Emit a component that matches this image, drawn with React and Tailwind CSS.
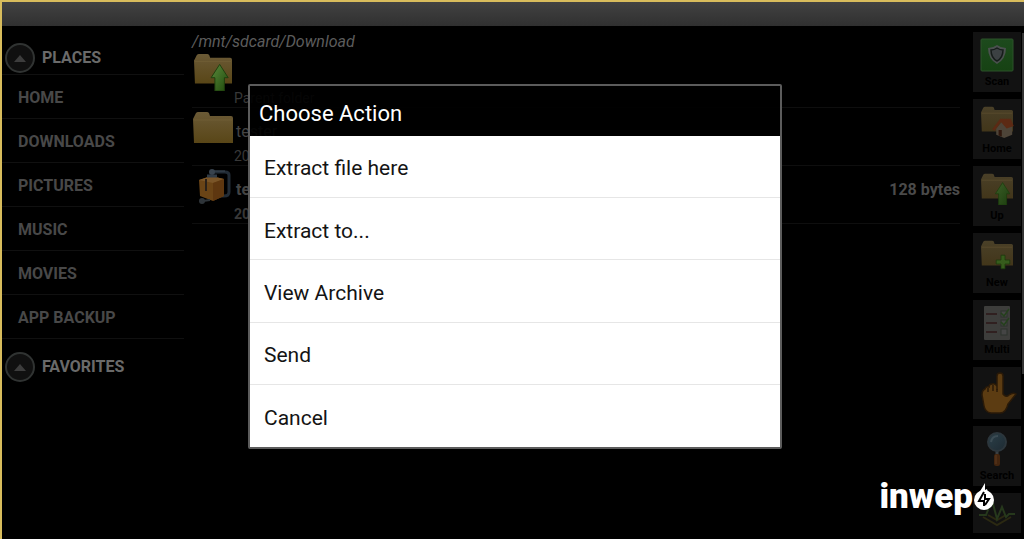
const places = ["HOME", "DOWNLOADS", "PICTURES", "MUSIC", "MOVIES", "APP BACKUP"];

const actions = ["Extract file here", "Extract to...", "View Archive", "Send", "Cancel"];

function Gradients() {
    return (
        <svg className="absolute h-0 w-0" aria-hidden="true">
            <defs>
                <linearGradient id="folder" x1="0" y1="0" x2="0" y2="1">
                    <stop offset="0" stopColor="#6b5a36" />
                    <stop offset="1" stopColor="#594617" />
                </linearGradient>
                <linearGradient id="folderDim" x1="0" y1="0" x2="0" y2="1">
                    <stop offset="0" stopColor="#4a4028" />
                    <stop offset="1" stopColor="#42361a" />
                </linearGradient>
                <linearGradient id="arrow" x1="0" y1="0" x2="1" y2="1">
                    <stop offset="0" stopColor="#5a8a3c" />
                    <stop offset="1" stopColor="#1f4a0c" />
                </linearGradient>
                <linearGradient id="arrowDim" x1="0" y1="0" x2="1" y2="1">
                    <stop offset="0" stopColor="#3c5e28" />
                    <stop offset="1" stopColor="#1c3e0e" />
                </linearGradient>
                <linearGradient id="scan" x1="0" y1="0" x2="0" y2="1">
                    <stop offset="0" stopColor="#1d4a1d" />
                    <stop offset="1" stopColor="#164213" />
                </linearGradient>
                <linearGradient id="lens" x1="0" y1="0" x2="1" y2="1">
                    <stop offset="0" stopColor="#2b4049" />
                    <stop offset="1" stopColor="#1e2a32" />
                </linearGradient>
            </defs>
        </svg>
    );
}

function FolderIcon({ className, fill = "url(#folder)", children }) {
    return (
        <svg viewBox="0 0 42 40" className={className} aria-hidden="true">
            <path d="M2 6 L4 2 Q5 1 6 1 H15 Q16 1 17 2 L18 5 H39 Q41 5 41 7 V32 H2 L1 8 Z" fill={fill} />
            <path d="M2 9 H40" stroke="#806c42" strokeOpacity="0.35" />
            {children}
        </svg>
    );
}

function ArrowUp({ fill = "url(#arrow)" }) {
    return <path d="M28 12 L37 26 H33 V40 H23 V26 H19 Z" fill={fill} stroke="#1d3d0e" strokeWidth="1" />;
}

function ArchiveIcon() {
    return (
        <svg viewBox="0 0 36 38" className="h-[38px] w-9" aria-hidden="true">
            <path d="M16 3 H30 Q34 3 34 6 V23 Q34 27 29 27 H25" fill="none" stroke="#222c36" strokeWidth="3" />
            <path d="M18 2 H30" stroke="#3c4854" />
            <path d="M4 11 L16 7 L29 10 V27 L18 32 L5 27 Z" fill="#6a4416" />
            <path d="M4 11 L16 7 L29 10 L18 14 Z" fill="#7a5528" />
            <path d="M18 14 L29 10 V27 L18 32 Z" fill="#5e3710" />
            <path d="M11 10 V22" stroke="#2b2119" strokeWidth="2" />
            <circle cx="17" cy="3" r="3" fill="#38434e" />
            <path d="M12 7 H22" stroke="#303b46" strokeWidth="3" />
            <circle cx="7" cy="32" r="3" fill="#2e3439" />
            <path d="M8 32 L15 31" stroke="#2e3439" strokeWidth="2" />
        </svg>
    );
}

function ScanIcon() {
    return (
        <svg viewBox="0 0 34 34" className="h-[34px] w-[34px]" aria-hidden="true">
            <rect x="1" y="1" width="32" height="32" rx="1" fill="url(#scan)" stroke="#2c522a" />
            <path d="M17 7 Q21 10 26 10 Q26 21 17 26 Q8 21 8 10 Q13 10 17 7 Z" fill="#4a504e" />
            <path d="M17 10 Q20 12 23 12 Q23 20 17 23 Q11 20 11 12 Q14 12 17 10 Z" fill="#3c4143" stroke="#161c1a" strokeWidth="1.5" />
        </svg>
    );
}

function HomeIcon() {
    return (
        <FolderIcon className="h-8 w-[34px]" fill="url(#folderDim)">
            <path d="M20 28 L27 20 L40 24 V36 L30 40 L20 36 Z" fill="#4d4438" />
            <path d="M15 29 L25 16 L38 16 L42 25 L33 28 L26 20 L18 31 Z" fill="#5c2a14" />
            <path d="M23 30 H27 V38 L23 37 Z" fill="#30180e" />
        </FolderIcon>
    );
}

function UpIcon() {
    return (
        <FolderIcon className="h-8 w-[34px]" fill="url(#folderDim)">
            <ArrowUp fill="url(#arrowDim)" />
        </FolderIcon>
    );
}

function NewIcon() {
    return (
        <FolderIcon className="h-8 w-[34px]" fill="url(#folderDim)">
            <path d="M26 19 H31 V25 H37 V30 H31 V36 H26 V30 H20 V25 H26 Z" fill="#365c1c" stroke="#1c3a0c" />
        </FolderIcon>
    );
}

function MultiIcon() {
    return (
        <svg viewBox="0 0 28 36" className="h-9 w-7" aria-hidden="true">
            <rect x="1" y="1" width="26" height="34" rx="1" fill="#3d3d3b" />
            <path d="M3 9 H14 M3 18 H14 M3 27 H14" stroke="#302020" strokeWidth="2" />
            <g fill="#454545" stroke="#2c332c">
                <rect x="18" y="6" width="6" height="6" />
                <rect x="18" y="15" width="6" height="6" />
                <rect x="18" y="24" width="6" height="6" />
            </g>
            <path d="M18 8 L21 11 L26 4 M18 17 L21 20 L26 13" fill="none" stroke="#24401c" strokeWidth="1.5" />
        </svg>
    );
}

function HandIcon() {
    return (
        <svg viewBox="0 0 36 42" className="ml-1 h-[42px] w-9" aria-hidden="true">
            <path
                d="M16 18 V4 Q16 1 19 1 Q22 1 22 4 V22 Q25 26 28 23 Q32 20 35 22 L27 32 Q25 41 19 41 H10 Q4 40 3 34 L1 23 Q1 18 4 17 Q5 14 8 15 Q8 12 11 12 Q14 11 16 14"
                fill="#5c3c12"
                stroke="#2a1a08"
                strokeWidth="1.5"
            />
            <path d="M7 16 V20 M12 13 V19 M16 17 V20" stroke="#2a1a08" strokeWidth="1.5" />
        </svg>
    );
}

function SearchIcon() {
    return (
        <svg viewBox="0 0 24 36" className="h-9 w-6" aria-hidden="true">
            <path d="M12 19 V24" stroke="#3a3f42" strokeWidth="3" />
            <rect x="9" y="23" width="6" height="12" rx="2" fill="#43250f" />
            <path d="M11 24 V33" stroke="#5c3a20" />
            <circle cx="12" cy="11" r="9" fill="url(#lens)" stroke="#2c363c" strokeWidth="2" />
            <path d="M6 11 Q7 5 13 5" fill="none" stroke="#3c4c54" strokeWidth="2" />
        </svg>
    );
}

function PulseIcon() {
    return (
        <svg viewBox="0 0 38 30" className="h-[30px] w-[38px]" aria-hidden="true">
            <path d="M5 19 L19 27 L33 19 M10 17 L19 22 L28 17" fill="none" stroke="#2b2912" strokeWidth="2" />
            <path d="M1 17 H8 L14 2 L19 21 L24 9 L28 19 L31 16 H37" fill="none" stroke="#26381c" strokeWidth="2" />
        </svg>
    );
}

const tools = [
    { label: "Scan", icon: ScanIcon },
    { label: "Home", icon: HomeIcon },
    { label: "Up", icon: UpIcon },
    { label: "New", icon: NewIcon },
    { label: "Multi", icon: MultiIcon },
    { icon: HandIcon, name: "Select" },
    { label: "Search", icon: SearchIcon },
    { icon: PulseIcon, name: "Monitor" },
];

function SectionHeader({ children }) {
    return (
        <button className="flex w-full items-center gap-[7px] pl-[3px] text-left text-base font-bold text-[#6a6a6a]">
            <span className="flex h-[30px] w-[30px] items-center justify-center rounded-full border-2 border-[#303332] bg-[#101010]">
                <svg viewBox="0 0 12 7" className="h-[7px] w-3" aria-hidden="true">
                    <path d="M6 0 L12 7 H0 Z" fill="#3d3d3d" />
                </svg>
            </span>
            {children}
        </button>
    );
}

function Sidebar() {
    return (
        <aside className="w-[182px] shrink-0 pt-[17px]">
            <SectionHeader>PLACES</SectionHeader>
            <ul className="mt-px border-t border-[#101010]">
                {places.map((place) => (
                    <li key={place} className="border-b border-[#101010]">
                        <a href="#" className="flex h-[43px] items-center pt-[2px] pl-4 text-base font-bold text-[#484848]">
                            {place}
                        </a>
                    </li>
                ))}
            </ul>
            <div className="mt-[13px]">
                <SectionHeader>FAVORITES</SectionHeader>
            </div>
        </aside>
    );
}

function FileRow({ icon, name, detail, size, bold }) {
    return (
        <li className="flex h-[58px] border-b border-[#0e0e0e]">
            <div className="flex w-[42px] shrink-0 justify-center pt-[3px]">{icon}</div>
            <div className={`flex flex-1 flex-col justify-between pb-px ${bold ? "font-bold" : ""}`}>
                <div className="flex justify-between pt-3 pl-[2px] text-base leading-6 text-[#444]">
                    <span>{name}</span>
                    <span className="text-[#4a4a4a]">{size}</span>
                </div>
                <span className="text-sm leading-4 text-[#383838]">{detail}</span>
            </div>
        </li>
    );
}

function Files() {
    return (
        <main className="ml-2 min-w-0 flex-1 pt-1">
            <p className="h-5 text-base text-[#5c5c5c] italic">/mnt/sdcard/Download</p>
            <ul>
                <FileRow
                    icon={
                        <FolderIcon className="h-[38px] w-10">
                            <ArrowUp />
                        </FolderIcon>
                    }
                    detail="Parent folder"
                />
                <FileRow icon={<FolderIcon className="h-10 w-[42px]" />} name="tester" detail="2013" />
                <FileRow icon={<ArchiveIcon />} name="test" detail="2013" size="128 bytes" bold />
            </ul>
        </main>
    );
}

function Toolbar() {
    return (
        <nav className="mt-[6px] ml-[13px] flex w-12 shrink-0 flex-col gap-[7px]">
            {tools.map(({ label, name, icon: Icon }) => (
                <button
                    key={label || name}
                    aria-label={label || name}
                    className={`flex w-full shrink-0 flex-col items-center bg-[#121212] ${label ? "h-[60px] pt-1" : name === "Select" ? "h-[52px] justify-center" : "h-10 justify-center"}`}
                >
                    <span className={label ? "flex h-[38px] items-center" : "flex"}>
                        <Icon />
                    </span>
                    {label && <span className="text-[11px] leading-4 font-bold text-black">{label}</span>}
                </button>
            ))}
        </nav>
    );
}

function ActionDialog() {
    return (
        <div className="absolute inset-0 flex items-center justify-center pb-2 pl-1">
            <div role="dialog" aria-labelledby="dialog-title" className="w-[534px] rounded-xs border-2 border-[#5c5c5c]">
                <h2 id="dialog-title" className="bg-black/90 px-[9px] pt-[14px] pb-2 text-[22px] leading-7 text-white">
                    Choose Action
                </h2>
                <ul className="grid h-[311px] auto-rows-fr divide-y divide-[#e6e6e6] bg-white">
                    {actions.map((action) => (
                        <li key={action}>
                            <button className="block h-full w-full pt-[5px] pl-[14px] text-left text-[21px] text-[#141414]">
                                {action}
                            </button>
                        </li>
                    ))}
                </ul>
            </div>
        </div>
    );
}

function Watermark() {
    return (
        <div className="absolute right-[29px] bottom-6 flex items-end text-white">
            <span className="text-[35px] leading-9 font-black">inwep</span>
            <svg viewBox="0 0 22 27" className="mb-[5px] h-[27px] w-[22px]" aria-hidden="true">
                <circle cx="11" cy="17" r="10" fill="#fff" />
                <path d="M12 0 L6 10 H15 L14 6 L12 7 Z" fill="#fff" />
                <path d="M11 9 L6 18 H11 V23 M12 22 L16 16 H12 V11" fill="none" stroke="#000" strokeWidth="2" />
            </svg>
        </div>
    );
}

export default function App() {
    return (
        <div className="relative flex h-screen flex-col overflow-hidden border-t-2 border-l-2 border-[#d8bc5c] bg-black font-[Roboto,sans-serif]">
            <Gradients />
            <header className="h-6 shrink-0 bg-linear-to-b from-[#424242] to-[#303030]" />
            <div className="flex min-h-0 flex-1">
                <Sidebar />
                <Files />
                <Toolbar />
                <div className="mt-[7px] ml-px h-[341px] w-[2px] shrink-0 bg-[#343434]" />
            </div>
            <ActionDialog />
            <Watermark />
        </div>
    );
}
